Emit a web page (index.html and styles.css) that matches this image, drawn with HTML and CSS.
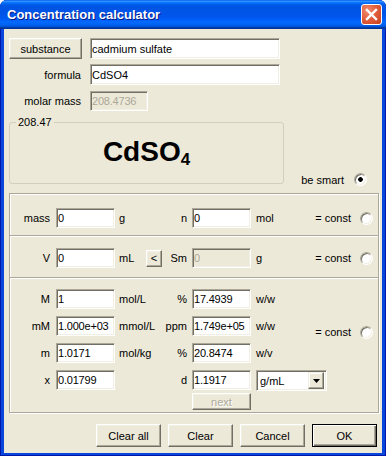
FILE: index.html
```html
<!DOCTYPE html>
<html lang="en">
<head>
    <meta charset="UTF-8">
    <title>Concentration calculator</title>
    <link rel="stylesheet" href="styles.css">
</head>
<body>
    <div class="window">
        <div class="titlebar">
            <span class="title">Concentration calculator</span>
            <button class="close" aria-label="close">
                <svg width="13" height="13" viewBox="0 0 13 13">
                    <path d="M2 2 L11 11 M11 2 L2 11" stroke="#fff" stroke-width="2.4" stroke-linecap="square"/>
                </svg>
            </button>
        </div>

        <div class="client">
            <div class="row">
                <button class="btn btn-substance">substance</button>
                <input class="field field-wide" value="cadmium sulfate">
            </div>
            <div class="row">
                <label class="row-label">formula</label>
                <input class="field field-wide" value="CdSO4">
            </div>
            <div class="row row-last">
                <label class="row-label">molar mass</label>
                <input class="field field-mass" value="208.4736" disabled>
            </div>

            <div class="formula-area">
                <fieldset class="groupbox">
                    <legend>208.47</legend>
                    <div class="formula">CdSO<sub>4</sub></div>
                </fieldset>
                <div class="smart">
                    <span>be smart</span>
                    <span class="radio checked"></span>
                </div>
            </div>

            <div class="panel">
                <div class="section sec-amount grid">
                    <span class="lbl-l">mass</span>
                    <input class="field" value="0">
                    <span class="unit">g</span>
                    <span class="lbl-r">n</span>
                    <input class="field" value="0">
                    <span class="unit-r">mol</span>
                    <div class="const"><span>= const</span><span class="radio"></span></div>
                </div>

                <div class="section sec-volume grid">
                    <span class="lbl-l">V</span>
                    <input class="field" value="0">
                    <span class="unit unit-btn">mL <button class="btn btn-small">&lt;</button></span>
                    <span class="lbl-r">Sm</span>
                    <input class="field" value="0" disabled>
                    <span class="unit-r">g</span>
                    <div class="const"><span>= const</span><span class="radio"></span></div>
                </div>

                <div class="section sec-conc grid">
                    <div class="const const-conc"><span>= const</span><span class="radio"></span></div>

                    <span class="lbl-l">M</span>
                    <input class="field" value="1">
                    <span class="unit">mol/L</span>
                    <span class="lbl-r">%</span>
                    <input class="field" value="17.4939">
                    <span class="unit-r">w/w</span>

                    <span class="lbl-l">mM</span>
                    <input class="field" value="1.000e+03">
                    <span class="unit">mmol/L</span>
                    <span class="lbl-r">ppm</span>
                    <input class="field" value="1.749e+05">
                    <span class="unit-r">w/w</span>

                    <span class="lbl-l">m</span>
                    <input class="field" value="1.0171">
                    <span class="unit">mol/kg</span>
                    <span class="lbl-r">%</span>
                    <input class="field" value="20.8474">
                    <span class="unit-r">w/v</span>

                    <span class="lbl-l">x</span>
                    <input class="field" value="0.01799">
                    <span class="unit"></span>
                    <span class="lbl-r">d</span>
                    <input class="field" value="1.1917">
                    <div class="select">
                        <span class="select-value">g/mL</span>
                        <span class="select-arrow">
                            <svg width="7" height="4" viewBox="0 0 7 4"><path d="M0 0 H7 L3.5 4 Z" fill="#000"/></svg>
                        </span>
                    </div>

                    <button class="btn btn-next" disabled>next</button>
                </div>
            </div>

            <div class="buttons">
                <button class="btn btn-dialog">Clear all</button>
                <button class="btn btn-dialog">Clear</button>
                <button class="btn btn-dialog">Cancel</button>
                <button class="btn btn-dialog btn-default">OK</button>
            </div>
        </div>
    </div>
</body>
</html>
```

FILE: styles.css
```css
body {
    margin: 0;
    background: #fff;
    font-family: "Liberation Sans", Arial, sans-serif;
    font-size: 11px;
    color: #000;
}
.window {
    width: 386px;
    height: 456px;
    display: flex;
    flex-direction: column;
    background: #0846DC;
    border-radius: 7px 7px 0 0;
    overflow: hidden;
    box-shadow: inset 1px 0 #0019A8, inset -1px 0 #0019A8, inset 0 -1px #0019A8;
}
.titlebar {
    height: 29px;
    flex: none;
    display: flex;
    align-items: center;
    padding: 0 4px 0 7px;
    background: linear-gradient(180deg, #0058EE 0%, #3593FF 4%, #288EFF 6%, #127DFF 8%, #036FFC 10%, #0262EE 14%, #0057E5 20%, #0054E3 24%, #0055EB 56%, #005BF5 66%, #026AFE 76%, #0062EF 86%, #0052D6 92%, #0040AB 94%, #003092 100%);
}
.title {
    flex: 1;
    color: #fff;
    font-weight: bold;
    font-size: 13px;
    text-shadow: 1px 1px #0A1883;
}
.close {
    width: 21px;
    height: 21px;
    padding: 0;
    border: 1px solid #fff;
    border-radius: 3px;
    background: radial-gradient(circle at 30% 30%, #F08C6E 0%, #E2603F 45%, #C73E1C 100%);
    display: flex;
    align-items: center;
    justify-content: center;
}
.client {
    flex: 1;
    margin: 0 4px 3px;
    background: #ECE9D8;
    padding: 9px 5px 0;
}

/* top rows */
.row {
    display: flex;
    align-items: center;
    gap: 8px;
    height: 21px;
    margin-bottom: 5px;
}
.row-last {
    margin-top: 6px;
    height: 20px;
}
.row-label {
    width: 73px;
    text-align: right;
    padding-right: 1px;
    box-sizing: border-box;
}

/* classic 3D controls */
.field {
    box-sizing: border-box;
    height: 20px;
    width: 59px;
    margin: 0;
    padding: 0 0 0 1px;
    font: inherit;
    letter-spacing: -0.2px;
    color: #000;
    background: #fff;
    border: 1px solid;
    border-color: #ACA899 #fff #fff #ACA899;
    box-shadow: inset 1px 1px #716F64, inset -1px -1px #F1EFE2;
    outline: none;
}
.field:disabled {
    background: #ECE9D8;
    color: #ACA899;
}
.field-wide {
    width: 190px;
    height: 21px;
    letter-spacing: 0;
}
.field-mass {
    width: 58px;
}
.btn {
    box-sizing: border-box;
    margin: 0;
    padding: 0;
    font: inherit;
    color: #000;
    background: #ECE9D8;
    border: 1px solid;
    border-color: #fff #716F64 #716F64 #fff;
    box-shadow: inset -1px -1px #ACA899, inset 1px 1px #F1EFE2;
}
.btn:disabled {
    color: #ACA899;
    text-shadow: 1px 1px #fff;
}
.btn-substance {
    width: 73px;
    height: 21px;
}

/* formula group */
.formula-area {
    display: flex;
    align-items: flex-end;
    margin-top: 5px;
}
.groupbox {
    width: 275px;
    height: 68px;
    box-sizing: border-box;
    margin: 0;
    padding: 0;
    border: 1px solid #D0D0BF;
    border-radius: 3px;
}
.groupbox legend {
    margin-left: 6px;
    padding: 0 2px;
    line-height: 13px;
}
.formula {
    text-align: center;
    font-size: 28px;
    font-weight: bold;
    line-height: 32px;
    margin-top: 7px;
}
.formula sub {
    font-size: 17px;
    vertical-align: -4px;
    line-height: 0;
}
.smart {
    margin-left: auto;
    margin-right: 10px;
    margin-bottom: -2px;
    display: flex;
    align-items: center;
    gap: 10px;
}
.radio {
    box-sizing: border-box;
    width: 13px;
    height: 13px;
    border-radius: 50%;
    border: 1px solid;
    border-color: #ACA899 #fff #fff #ACA899;
    background: #fff;
    box-shadow: inset 1px 1px #716F64, inset -1px -1px #F1EFE2;
}
.radio.checked {
    background: radial-gradient(circle, #000 0 2px, #fff 2.6px);
}

/* main panel */
.panel {
    margin-top: 9px;
    width: 368px;
    border: 1px solid #ACA899;
    box-shadow: inset 1px 1px #fff, 1px 1px #fff;
}
.section + .section {
    border-top: 1px solid #ACA899;
    box-shadow: inset 0 1px #fff;
}
.grid {
    display: grid;
    grid-template-columns: 46px 59px 49px 28px 59px 54px 1fr;
    align-items: center;
}
.sec-amount {
    padding: 14px 0 7px;
}
.sec-volume {
    padding: 12px 0 9px;
}
.sec-conc {
    padding: 11px 0 2px;
    grid-template-rows: 27px 27px 27px 23px 17px;
    align-items: start;
}
.sec-conc > span {
    line-height: 20px;
}
.lbl-l {
    text-align: right;
    padding-right: 6px;
}
.unit {
    padding-left: 4px;
    white-space: nowrap;
}
.unit-btn {
    display: flex;
    align-items: center;
}
.btn-small {
    width: 16px;
    height: 17px;
    margin-left: auto;
    margin-right: 2px;
}
.lbl-r {
    text-align: right;
    padding-right: 5px;
}
.unit-r {
    padding-left: 5px;
}
.const {
    display: flex;
    align-items: center;
    justify-content: flex-end;
    gap: 9px;
    padding-right: 5px;
}
.const-conc {
    grid-column: 7;
    grid-row: 1 / 4;
    align-self: center;
    padding-top: 5px;
}
.select {
    grid-column: 6 / 8;
    grid-row: 4;
    margin-left: 5px;
    box-sizing: border-box;
    width: 71px;
    height: 21px;
    display: flex;
    align-items: center;
    background: #fff;
    border: 1px solid;
    border-color: #ACA899 #fff #fff #ACA899;
    box-shadow: inset 1px 1px #716F64, inset -1px -1px #F1EFE2;
    padding: 2px;
}
.select-value {
    flex: 1;
    padding-left: 1px;
}
.select-arrow {
    box-sizing: border-box;
    width: 16px;
    height: 17px;
    display: flex;
    align-items: center;
    justify-content: center;
    background: #ECE9D8;
    border: 1px solid;
    border-color: #F1EFE2 #716F64 #716F64 #F1EFE2;
    box-shadow: inset -1px -1px #ACA899, inset 1px 1px #fff;
}
.btn-next {
    grid-column: 5;
    grid-row: 5;
    width: 59px;
    height: 17px;
}

/* dialog buttons */
.buttons {
    display: flex;
    justify-content: flex-end;
    gap: 7px;
    margin-top: 11px;
}
.btn-dialog {
    width: 65px;
    height: 23px;
}
.btn-default {
    border: 1px solid #000;
    box-shadow: inset 1px 1px #fff, inset -1px -1px #716F64, inset -2px -2px #ACA899;
}
```
